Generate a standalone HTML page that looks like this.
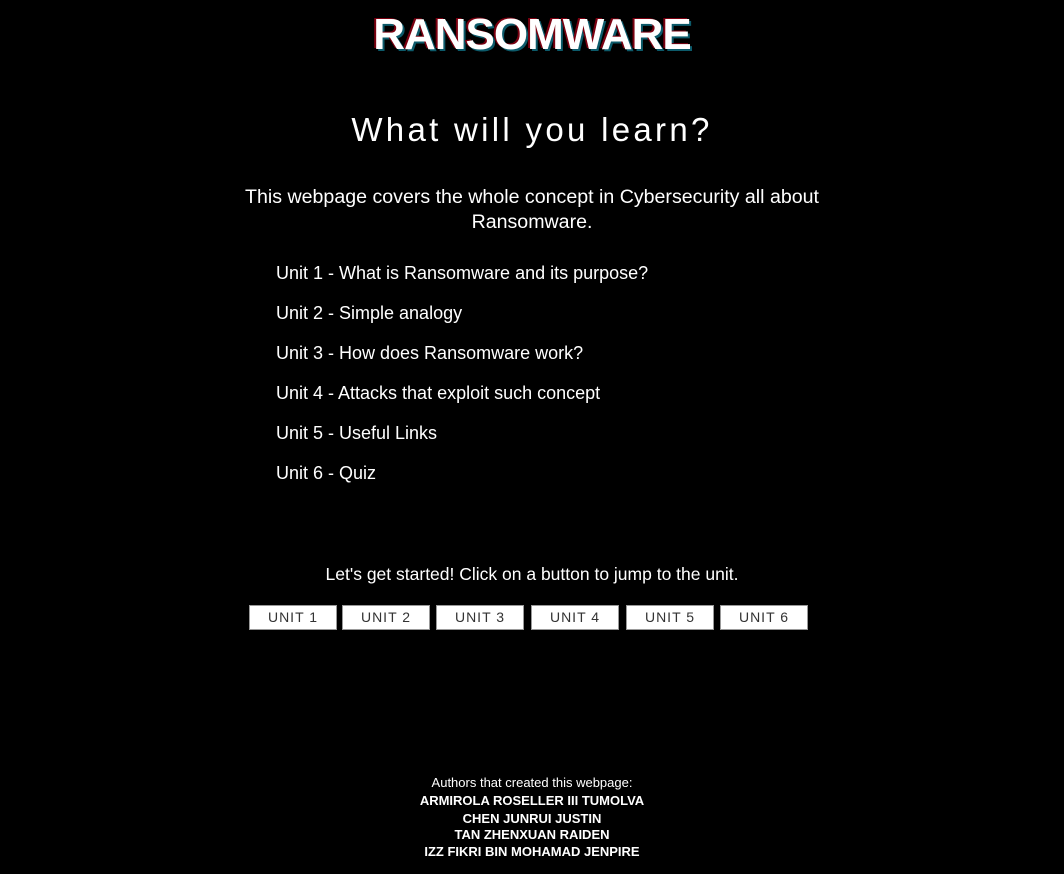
<!DOCTYPE html>
<html><head><style>
body{margin:0;background:#000;width:1064px;height:874px;overflow:hidden;font-family:"Liberation Sans",sans-serif;color:#fff;position:relative}
.a{position:absolute;white-space:nowrap}
h1{position:absolute;left:0;width:1064px;text-align:center;top:10px;margin:0;font-size:44px;font-weight:bold;letter-spacing:-1px;text-shadow:-2px -1px 0 #7a0010,2px 2px 0 #0c5a6a}
.c{left:0;width:1064px;text-align:center}
.li{left:276px;font-size:18px}
.b{position:absolute;top:605px;width:88px;height:25px;background:#fff;color:#333;font-size:14px;letter-spacing:1px;text-align:center;line-height:22px;box-sizing:border-box;border:1px solid #999}
.f{font-size:13px;left:0;width:1064px;text-align:center;font-weight:bold}
</style></head><body>
<h1>RANSOMWARE</h1>
<div class="a c" style="top:111px;font-size:33px;letter-spacing:3.3px">What will you learn?</div>
<div class="a c" style="top:185px;font-size:19.6px;line-height:25px">This webpage covers the whole concept in Cybersecurity all about<br>Ransomware.</div>
<div class="a li" style="top:263px">Unit 1 - What is Ransomware and its purpose?</div>
<div class="a li" style="top:303px">Unit 2 - Simple analogy</div>
<div class="a li" style="top:343px">Unit 3 - How does Ransomware work?</div>
<div class="a li" style="top:383px">Unit 4 - Attacks that exploit such concept</div>
<div class="a li" style="top:423px">Unit 5 - Useful Links</div>
<div class="a li" style="top:463px">Unit 6 - Quiz</div>
<div class="a c" style="top:564px;font-size:17.5px">Let's get started! Click on a button to jump to the unit.</div>
<div class="b" style="left:249px">UNIT 1</div>
<div class="b" style="left:342px">UNIT 2</div>
<div class="b" style="left:436px">UNIT 3</div>
<div class="b" style="left:531px">UNIT 4</div>
<div class="b" style="left:626px">UNIT 5</div>
<div class="b" style="left:720px">UNIT 6</div>
<div class="a f" style="top:775px;font-weight:normal">Authors that created this webpage:</div>
<div class="a f" style="top:793px">ARMIROLA ROSELLER III TUMOLVA</div>
<div class="a f" style="top:811px">CHEN JUNRUI JUSTIN</div>
<div class="a f" style="top:827px">TAN ZHENXUAN RAIDEN</div>
<div class="a f" style="top:844px">IZZ FIKRI BIN MOHAMAD JENPIRE</div>
</body></html>
